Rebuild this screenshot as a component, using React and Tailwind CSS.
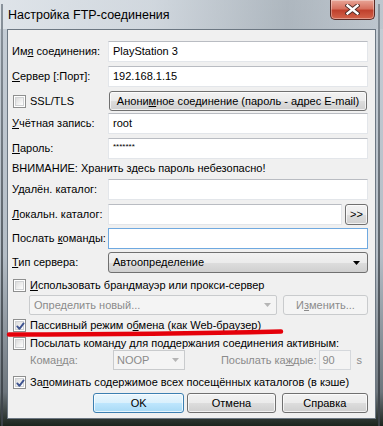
import React from 'react';

const font = { fontFamily: '"Liberation Sans", Arial, sans-serif' };

// Win7-like controls
const btnBg = 'bg-[linear-gradient(#f2f2f2_0%,#ebebeb_50%,#dddddd_51%,#cfcfcf_100%)]';

const Mn = ({ children }) => <span className="underline underline-offset-[1px]">{children}</span>;

const TextBox = ({ value, className = '', focused = false }) => (
  <div
    className={`h-[21px] bg-white border flex items-center px-[4px] text-[11px] text-black ${
      focused ? 'border-[#6fa9e0]' : 'border-[#e3e6ea] border-t-[#b9bcc2]'
    } ${className}`}
  >
    {value}
  </div>
);

const Button = ({ children, className = '', primary = false }) => (
  <div
    className={`h-[20px] rounded-[3px] border flex items-center justify-center text-[11px] text-black shadow-[inset_0_0_0_1px_rgba(255,255,255,0.7)] ${
      primary
        ? 'border-[#3c7fb1] bg-[linear-gradient(#eaf6fd_0%,#d9f0fc_50%,#bee6fd_51%,#a7d9f5_100%)] shadow-[inset_0_0_0_1px_#9fd6f5]'
        : `border-[#707070] ${btnBg}`
    } ${className}`}
  >
    {children}
  </div>
);

const Check = ({ checked }) => (
  <div className="w-[13px] h-[13px] shrink-0 border border-[#8e8f8f] bg-white p-[1px]">
    <div className="w-full h-full border border-[#d0d2d4] bg-[linear-gradient(135deg,#dcdcdc,#ffffff)] relative">
      {checked && (
        <svg width="11" height="11" viewBox="0 0 11 11" className="absolute -left-[1px] -top-[1px]">
          <path d="M2.3 5.4 L4.4 7.8 L8.6 2.4" fill="none" stroke="#3f5490" strokeWidth="1.9" strokeLinecap="round" strokeLinejoin="round" />
        </svg>
      )}
    </div>
  </div>
);

const Arrow = ({ color = '#000' }) => (
  <svg width="7" height="4" viewBox="0 0 7 4">
    <path d="M0 0 H7 L3.5 4 Z" fill={color} />
  </svg>
);

const FieldRow = ({ label, children, className = '' }) => (
  <div className={`flex items-center h-[21px] ${className}`}>
    <div className="w-[96px] shrink-0 text-[11px] text-black whitespace-nowrap">{label}</div>
    {children}
  </div>
);

const CheckRow = ({ checked, children, className = '' }) => (
  <div className={`flex items-center h-[14px] ${className}`}>
    <div className="ml-[1px]">
      <Check checked={checked} />
    </div>
    <div className="ml-[4px] text-[11px] text-black whitespace-nowrap">{children}</div>
  </div>
);

export default function App() {
  return (
    <div
      className="relative w-[383px] h-[426px] overflow-hidden bg-[linear-gradient(180deg,#c6ced6_0%,#b4bdc6_60%,#6d757c_92%,#1c241d_100%)]"
      style={font}
    >
      {/* frame edges */}
      <div className="absolute left-[1px] top-[4px] bottom-0 w-[2px] bg-[linear-gradient(#8a939c,#3b4147)]" />
      <div className="absolute right-[3px] top-[4px] bottom-0 w-[2px] bg-[linear-gradient(#8a939c,#3b4147)]" />

      {/* title bar */}
      <div className="h-[29px] flex items-start bg-[linear-gradient(90deg,rgba(225,230,235,0.9)_0%,rgba(215,221,227,0.6)_40%,rgba(150,160,168,0.5)_75%,rgba(175,183,190,0.3)_100%)]">
        <div className="pl-[8px] pt-[7px] text-[12.5px] leading-[16px] text-black">Настройка FTP-соединения</div>
        <div className="ml-auto mr-[8px] w-[45px] h-[20px] rounded-b-[5px] border border-t-0 border-[#5a2a25] bg-[linear-gradient(#e8a597_0%,#d7715f_45%,#c0412d_55%,#d3644c_100%)] shadow-[inset_0_0_0_1px_rgba(255,255,255,0.35)] flex items-center justify-center">
          <svg width="15" height="11" viewBox="0 0 15 11">
            <path d="M2.5 1.5 L12.5 9.5 M12.5 1.5 L2.5 9.5" stroke="#4b2a26" strokeWidth="4.2" strokeLinecap="square" />
            <path d="M2.5 1.5 L12.5 9.5 M12.5 1.5 L2.5 9.5" stroke="#ffffff" strokeWidth="2.4" strokeLinecap="square" />
          </svg>
        </div>
      </div>

      {/* client area */}
      <div className="mx-[7px] h-[390px] border border-[#6c7782] bg-[#f0f0f0] flex flex-col pl-[4px] pr-[7px]">
        <FieldRow label={<>Им<Mn>я</Mn> соединения:</>} className="mt-[11px]">
          <TextBox value="PlayStation 3" className="flex-1" />
        </FieldRow>
        <FieldRow label={<><Mn>С</Mn>ервер [:Порт]:</>} className="mt-[4px]">
          <TextBox value="192.168.1.15" className="flex-1" />
        </FieldRow>
        <div className="flex items-center h-[20px] mt-[4px]">
          <CheckRow checked={false}>SSL/TLS</CheckRow>
          <Button className="ml-auto w-[258px] mr-[1px]">
            <span>Анони<Mn>м</Mn>ное соединение (пароль - адрес E-mail)</span>
          </Button>
        </div>
        <FieldRow label={<><Mn>У</Mn>чётная запись:</>} className="mt-[2px]">
          <TextBox value="root" className="flex-1" />
        </FieldRow>
        <FieldRow label={<><Mn>П</Mn>ароль:</>} className="mt-[4px]">
          <TextBox value={<span className="text-[8px] tracking-[0px] -mt-[3px]">*******</span>} className="flex-1" />
        </FieldRow>
        <div className="h-[17px] mt-[1px] flex items-center text-[11px] text-black whitespace-nowrap">
          ВНИМАНИЕ: Хранить здесь пароль небезопасно!
        </div>
        <FieldRow label={<>У<Mn>д</Mn>алён. каталог:</>} className="mt-[2px]">
          <TextBox value="" className="flex-1" />
        </FieldRow>
        <FieldRow label={<><Mn>Л</Mn>окальн. каталог:</>} className="mt-[4px]">
          <TextBox value="" className="w-[234px]" />
          <Button className="ml-auto w-[23px] h-[21px] text-[10px]">&gt;&gt;</Button>
        </FieldRow>
        <FieldRow label={<>Послать <Mn>к</Mn>оманды:</>} className="mt-[3px]">
          <TextBox value="" className="flex-1" focused />
        </FieldRow>
        <FieldRow label={<><Mn>Т</Mn>ип сервера:</>} className="mt-[3px]">
          <div className={`flex-1 h-[21px] rounded-[3px] border border-[#707070] ${btnBg} flex items-center px-[4px] text-[11px] text-black`}>
            <span>Автоопределение</span>
            <span className="ml-auto mr-[3px] flex"><Arrow /></span>
          </div>
        </FieldRow>

        <CheckRow checked={false} className="mt-[5px]">
          <Mn>И</Mn>спользовать брандмауэр или прокси-сервер
        </CheckRow>
        <div className="flex items-center h-[20px] mt-[3px] ml-[17px]">
          <div className="w-[248px] h-[20px] rounded-[2px] border border-[#c9cbcd] bg-[#f4f4f4] flex items-center px-[4px] text-[11px] text-[#8b8b8b]">
            <span>Определить новый...</span>
            <span className="ml-auto mr-[1px] flex"><Arrow color="#b5b5b5" /></span>
          </div>
          <div className="ml-[6px] w-[85px] h-[20px] rounded-[3px] border border-[#c9cbcd] bg-[#f4f4f4] flex items-center justify-center text-[11px] text-[#8b8b8b]">
            <span>И<Mn>з</Mn>менить...</span>
          </div>
        </div>
        <CheckRow checked className="mt-[3px]">
          Пассивный режим о<Mn>б</Mn>мена (как Web-браузер)
        </CheckRow>
        <CheckRow checked={false} className="mt-[4px]">
          Посылать коман<Mn>д</Mn>у для поддержания соединения активным:
        </CheckRow>
        <div className="flex items-center h-[20px] ml-[18px] text-[11px] text-[#8b8b8b]">
          <span className="w-[83px] shrink-0">Кома<Mn>н</Mn>да:</span>
          <div className="w-[72px] h-[20px] border border-[#c9cbcd] bg-[#f4f4f4] flex items-center px-[3px] text-[#8b8b8b]">
            <span>NOOP</span>
            <span className="ml-auto mr-[2px] flex"><Arrow color="#b5b5b5" /></span>
          </div>
          <span className="ml-auto">Посылать ка<Mn>ж</Mn>дые:</span>
          <div className="ml-[2px] w-[32px] h-[20px] border border-[#d5d8dc] bg-[#f4f4f4] flex items-center px-[3px]">90</div>
          <span className="ml-[6px] mr-[6px]">s</span>
        </div>
        <CheckRow checked className="mt-[5px]">
          За<Mn>п</Mn>оминать содержимое всех посещённых каталогов (в кэше)
        </CheckRow>
        <div className="flex items-center h-[20px] mt-[4px]">
          <Button primary className="ml-[81px] w-[92px]">OK</Button>
          <Button className="ml-[3px] w-[89px]">Отмена</Button>
          <Button className="ml-[6px] w-[87px]">Справка</Button>
        </div>
      </div>

      {/* red marker stroke */}
      <svg className="absolute left-0 top-0 pointer-events-none" width="383" height="426" viewBox="0 0 383 426">
        <path d="M9 334.5 C 80 334.5, 200 333.5, 281 331.5" fill="none" stroke="#e5000a" strokeWidth="4.5" strokeLinecap="round" />
      </svg>
    </div>
  );
}
